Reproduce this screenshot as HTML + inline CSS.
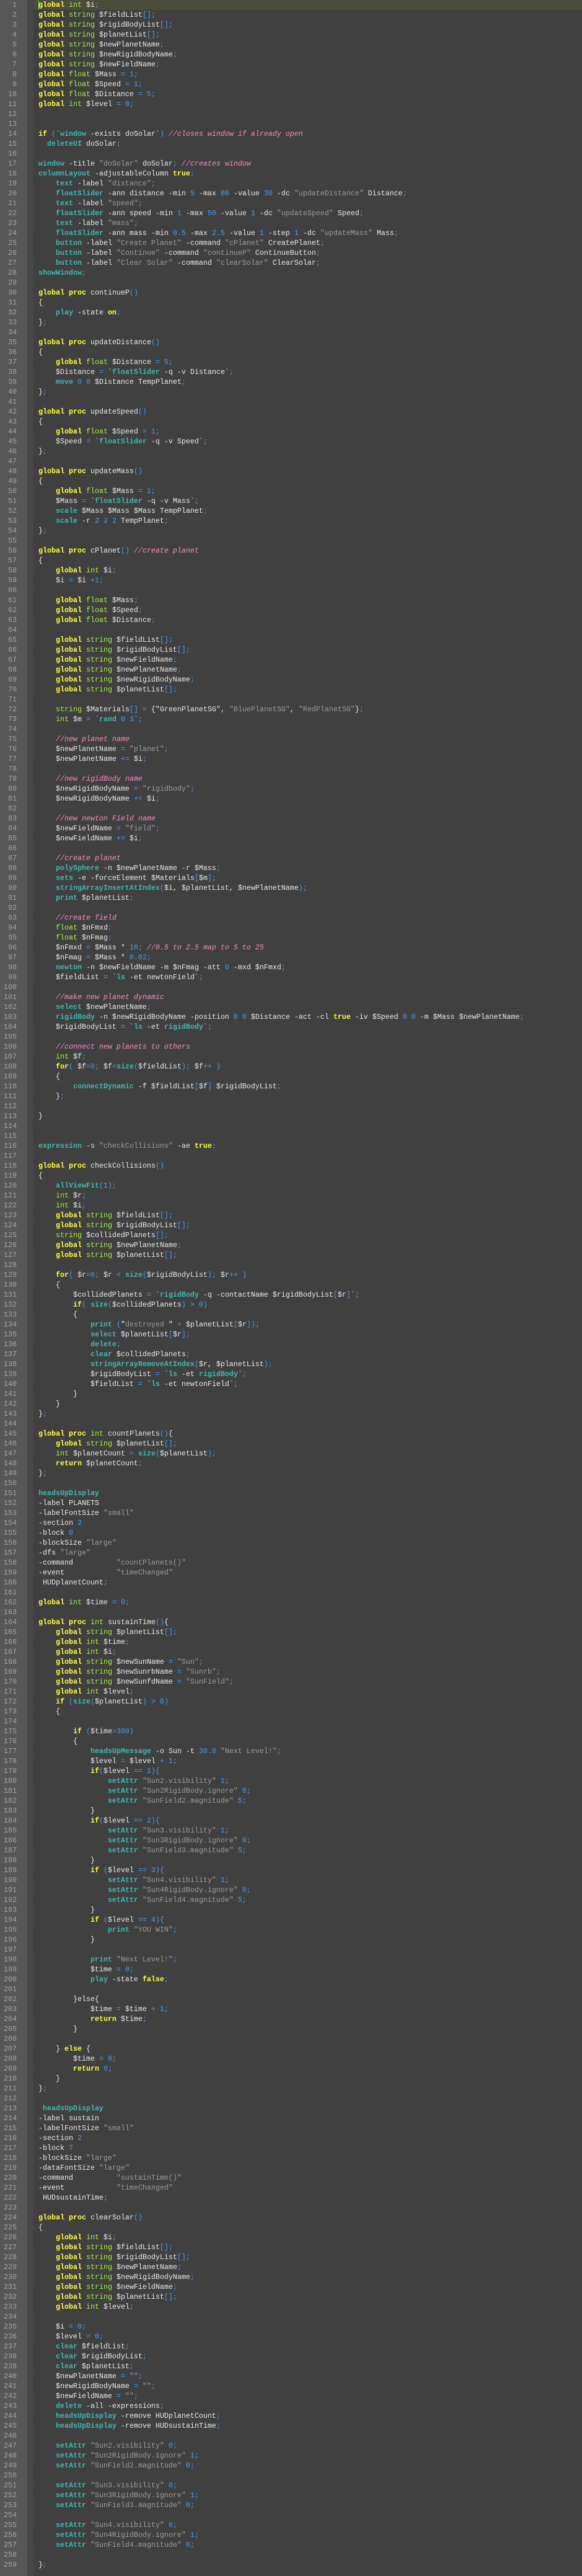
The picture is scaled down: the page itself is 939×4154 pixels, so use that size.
<!DOCTYPE html>
<html><head><meta charset="utf-8">
<style>
html,body{margin:0;padding:0;background:#404040;width:939px;height:4154px;overflow:hidden}
body{position:relative;font-family:"Liberation Mono",monospace;font-size:11.67px}
#gut{position:absolute;left:0;top:0;width:44px;height:4154px;background:#575757}
#strip{position:absolute;left:44px;top:0;width:10px;height:4154px;background-color:#4a4a4a;background-image:repeating-linear-gradient(45deg,#444 0 1px,transparent 1px 2px)}
#hl{position:absolute;left:54px;top:0;width:885px;height:16px;background:#4c4c3a}
#cur{position:absolute;left:62px;top:1px;width:1px;height:14px;background:#7cff40}
pre{margin:0;position:absolute;top:0;line-height:16px;font-family:inherit;font-size:inherit}
#nums{left:0;width:27px;text-align:right;color:#a4a4a4}
#code{left:62px;color:#e8e8e8}
k{color:#ffff3c;font-weight:bold}
t{color:#a6f03a}
c{color:#3fb8b0;font-weight:bold}
g{color:#9c9c9c}
n{color:#4a9cf0}
m{color:#f58cc0;font-style:italic}
</style></head><body>
<div id="gut"></div><div id="strip"></div><div id="hl"></div>
<pre id="nums">1
2
3
4
5
6
7
8
9
10
11
12
13
14
15
16
17
18
19
20
21
22
23
24
25
26
27
28
29
30
31
32
33
34
35
36
37
38
39
40
41
42
43
44
45
46
47
48
49
50
51
52
53
54
55
56
57
58
59
60
61
62
63
64
65
66
67
68
69
70
71
72
73
74
75
76
77
78
79
80
81
82
83
84
85
86
87
88
89
90
91
92
93
94
95
96
97
98
99
100
101
102
103
104
105
106
107
108
109
110
111
112
113
114
115
116
117
118
119
120
121
122
123
124
125
126
127
128
129
130
131
132
133
134
135
136
137
138
139
140
141
142
143
144
145
146
147
148
149
150
151
152
153
154
155
156
157
158
159
160
161
162
163
164
165
166
167
168
169
170
171
172
173
174
175
176
177
178
179
180
181
182
183
184
185
186
187
188
189
190
191
192
193
194
195
196
197
198
199
200
201
202
203
204
205
206
207
208
209
210
211
212
213
214
215
216
217
218
219
220
221
222
223
224
225
226
227
228
229
230
231
232
233
234
235
236
237
238
239
240
241
242
243
244
245
246
247
248
249
250
251
252
253
254
255
256
257
258
259</pre>
<pre id="code"><k>global</k> <t>int</t> $i<n>;</n>
<k>global</k> <t>string</t> $fieldList<n>[];</n>
<k>global</k> <t>string</t> $rigidBodyList<n>[];</n>
<k>global</k> <t>string</t> $planetList<n>[];</n>
<k>global</k> <t>string</t> $newPlanetName<n>;</n>
<k>global</k> <t>string</t> $newRigidBodyName<n>;</n>
<k>global</k> <t>string</t> $newFieldName<n>;</n>
<k>global</k> <t>float</t> $Mass <n>=</n> <n>1;</n>
<k>global</k> <t>float</t> $Speed <n>=</n> <n>1;</n>
<k>global</k> <t>float</t> $Distance <n>=</n> <n>5;</n>
<k>global</k> <t>int</t> $level <n>=</n> <n>0;</n>


<k>if</k> <n>(</n>`<c>window</c> -exists doSolar`<n>)</n> <m>//closes window if already open</m>
  <c>deleteUI</c> doSolar<n>;</n>

<c>window</c> -title <g>"doSolar"</g> doSolar<n>;</n> <m>//creates window</m>
<c>columnLayout</c> -adjustableColumn <k>true</k><n>;</n>
    <c>text</c> -label <g>"distance"</g><n>;</n>
    <c>floatSlider</c> -ann distance -min <n>5</n> -max <n>80</n> -value <n>30</n> -dc <g>"updateDistance"</g> Distance<n>;</n>
    <c>text</c> -label <g>"speed"</g><n>;</n>
    <c>floatSlider</c> -ann speed -min <n>1</n> -max <n>50</n> -value <n>1</n> -dc <g>"updateSpeed"</g> Speed<n>;</n>
    <c>text</c> -label <g>"mass"</g><n>;</n>
    <c>floatSlider</c> -ann mass -min <n>0.5</n> -max <n>2.5</n> -value <n>1</n> -step <n>1</n> -dc <g>"updateMass"</g> Mass<n>;</n>
    <c>button</c> -label <g>"Create Planet"</g> -command <g>"cPlanet"</g> CreatePlanet<n>;</n>
    <c>button</c> -label <g>"Continue"</g> -command <g>"continueP"</g> ContinueButton<n>;</n>
    <c>button</c> -label <g>"Clear Solar"</g> -command <g>"clearSolar"</g> ClearSolar<n>;</n>
<c>showWindow</c><n>;</n>

<k>global</k> <k>proc</k> continueP<n>()</n>
{
    <c>play</c> -state <k>on</k><n>;</n>
}<n>;</n>

<k>global</k> <k>proc</k> updateDistance<n>()</n>
{
    <k>global</k> <t>float</t> $Distance <n>=</n> <n>5;</n>
    $Distance <n>=</n> `<c>floatSlider</c> -q -v Distance`<n>;</n>
    <c>move</c> <n>0</n> <n>0</n> $Distance TempPlanet<n>;</n>
}<n>;</n>

<k>global</k> <k>proc</k> updateSpeed<n>()</n>
{
    <k>global</k> <t>float</t> $Speed <n>=</n> <n>1;</n>
    $Speed <n>=</n> `<c>floatSlider</c> -q -v Speed`<n>;</n>
}<n>;</n>

<k>global</k> <k>proc</k> updateMass<n>()</n>
{
    <k>global</k> <t>float</t> $Mass <n>=</n> <n>1;</n>
    $Mass <n>=</n> `<c>floatSlider</c> -q -v Mass`<n>;</n>
    <c>scale</c> $Mass $Mass $Mass TempPlanet<n>;</n>
    <c>scale</c> -r <n>2</n> <n>2</n> <n>2</n> TempPlanet<n>;</n>
}<n>;</n>

<k>global</k> <k>proc</k> cPlanet<n>()</n> <m>//create planet</m>
{
    <k>global</k> <t>int</t> $i<n>;</n>
    $i <n>=</n> $i <n>+1;</n>

    <k>global</k> <t>float</t> $Mass<n>;</n>
    <k>global</k> <t>float</t> $Speed<n>;</n>
    <k>global</k> <t>float</t> $Distance<n>;</n>

    <k>global</k> <t>string</t> $fieldList<n>[];</n>
    <k>global</k> <t>string</t> $rigidBodyList<n>[];</n>
    <k>global</k> <t>string</t> $newFieldName<n>;</n>
    <k>global</k> <t>string</t> $newPlanetName<n>;</n>
    <k>global</k> <t>string</t> $newRigidBodyName<n>;</n>
    <k>global</k> <t>string</t> $planetList<n>[];</n>

    <t>string</t> $Materials<n>[]</n> <n>=</n> {"GreenPlanetSG", <g>"BluePlanetSG"</g>, <g>"RedPlanetSG"</g>}<n>;</n>
    <t>int</t> $m <n>=</n> `<c>rand</c> <n>0</n> <n>3</n>`<n>;</n>

    <m>//new planet name</m>
    $newPlanetName <n>=</n> <g>"planet"</g><n>;</n>
    $newPlanetName <n>+=</n> $i<n>;</n>

    <m>//new rigidBody name</m>
    $newRigidBodyName <n>=</n> <g>"rigidbody"</g><n>;</n>
    $newRigidBodyName <n>+=</n> $i<n>;</n>

    <m>//new newton Field name</m>
    $newFieldName <n>=</n> <g>"field"</g><n>;</n>
    $newFieldName <n>+=</n> $i<n>;</n>

    <m>//create planet</m>
    <c>polySphere</c> -n $newPlanetName -r $Mass<n>;</n>
    <c>sets</c> -e -forceElement $Materials<n>[</n>$m<n>];</n>
    <c>stringArrayInsertAtIndex</c><n>(</n>$i, $planetList, $newPlanetName<n>);</n>
    <c>print</c> $planetList<n>;</n>

    <m>//create field</m>
    <t>float</t> $nFmxd<n>;</n>
    <t>float</t> $nFmag<n>;</n>
    $nFmxd <n>=</n> $Mass * <n>10;</n> <m>//0.5 to 2.5 map to 5 to 25</m>
    $nFmag <n>=</n> $Mass * <n>0.02;</n>
    <c>newton</c> -n $newFieldName -m $nFmag -att <n>0</n> -mxd $nFmxd<n>;</n>
    $fieldList <n>=</n> `<c>ls</c> -et newtonField`<n>;</n>

    <m>//make new planet dynamic</m>
    <c>select</c> $newPlanetName<n>;</n>
    <c>rigidBody</c> -n $newRigidBodyName -position <n>0</n> <n>0</n> $Distance -act -cl <k>true</k> -iv $Speed <n>0</n> <n>0</n> -m $Mass $newPlanetName<n>;</n>
    $rigidBodyList <n>=</n> `<c>ls</c> -et <c>rigidBody</c>`<n>;</n>

    <m>//connect new planets to others</m>
    <t>int</t> $f<n>;</n>
    <k>for</k><n>(</n> $f<n>=0;</n> $f<n>&lt;</n><c>size</c><n>(</n>$fieldList<n>);</n> $f<n>++ )</n>
    {
        <c>connectDynamic</c> -f $fieldList<n>[</n>$f<n>]</n> $rigidBodyList<n>;</n>
    }<n>;</n>

}


<c>expression</c> -s <g>"checkCollisions"</g> -ae <k>true</k><n>;</n>

<k>global</k> <k>proc</k> checkCollisions<n>()</n>
{
    <c>allViewFit</c><n>(1);</n>
    <t>int</t> $r<n>;</n>
    <t>int</t> $i<n>;</n>
    <k>global</k> <t>string</t> $fieldList<n>[];</n>
    <k>global</k> <t>string</t> $rigidBodyList<n>[];</n>
    <t>string</t> $collidedPlanets<n>[];</n>
    <k>global</k> <t>string</t> $newPlanetName<n>;</n>
    <k>global</k> <t>string</t> $planetList<n>[];</n>

    <k>for</k><n>(</n> $r<n>=0;</n> $r <n>&lt;</n> <c>size</c><n>(</n>$rigidBodyList<n>);</n> $r<n>++ )</n>
    {
        $collidedPlanets <n>=</n> `<c>rigidBody</c> -q -contactName $rigidBodyList<n>[</n>$r<n>]</n>`<n>;</n>
        <k>if</k><n>(</n> <c>size</c><n>(</n>$collidedPlanets<n>)</n> <n>&gt;</n> <n>0)</n>
        {
            <c>print</c> <n>(</n>"<g>destroyed </g>" <n>+</n> $planetList<n>[</n>$r<n>]);</n>
            <c>select</c> $planetList<n>[</n>$r<n>];</n>
            <c>delete</c><n>;</n>
            <c>clear</c> $collidedPlanets<n>;</n>
            <c>stringArrayRemoveAtIndex</c><n>(</n>$r, $planetList<n>);</n>
            $rigidBodyList <n>=</n> `<c>ls</c> -et <c>rigidBody</c>`<n>;</n>
            $fieldList <n>=</n> `<c>ls</c> -et newtonField`<n>;</n>
        }
    }
}<n>;</n>

<k>global</k> <k>proc</k> <t>int</t> countPlanets<n>()</n>{
    <k>global</k> <t>string</t> $planetList<n>[];</n>
    <t>int</t> $planetCount <n>=</n> <c>size</c><n>(</n>$planetList<n>);</n>
    <k>return</k> $planetCount<n>;</n>
}<n>;</n>

<c>headsUpDisplay</c>
-label PLANETS
-labelFontSize <g>"small"</g>
-section <n>2</n>
-block <n>0</n>
-blockSize <g>"large"</g>
-dfs <g>"large"</g>
-command          <g>"countPlanets()"</g>
-event            <g>"timeChanged"</g>
 HUDplanetCount<n>;</n>

<k>global</k> <t>int</t> $time <n>=</n> <n>0;</n>

<k>global</k> <k>proc</k> <t>int</t> sustainTime<n>()</n>{
    <k>global</k> <t>string</t> $planetList<n>[];</n>
    <k>global</k> <t>int</t> $time<n>;</n>
    <k>global</k> <t>int</t> $i<n>;</n>
    <k>global</k> <t>string</t> $newSunName <n>=</n> <g>"Sun"</g><n>;</n>
    <k>global</k> <t>string</t> $newSunrbName <n>=</n> <g>"Sunrb"</g><n>;</n>
    <k>global</k> <t>string</t> $newSunfdName <n>=</n> <g>"SunField"</g><n>;</n>
    <k>global</k> <t>int</t> $level<n>;</n>
    <k>if</k> <n>(</n><c>size</c><n>(</n>$planetList<n>)</n> <n>&gt;</n> <n>8)</n>
    {

        <k>if</k> <n>(</n>$time<n>&gt;300)</n>
        {
            <c>headsUpMessage</c> -o Sun -t <n>30.0</n> <g>"Next Level!"</g><n>;</n>
            $level <n>=</n> $level <n>+</n> <n>1;</n>
            <k>if</k><n>(</n>$level <n>==</n> <n>1){</n>
                <c>setAttr</c> <g>"Sun2.visibility"</g> <n>1;</n>
                <c>setAttr</c> <g>"Sun2RigidBody.ignore"</g> <n>0;</n>
                <c>setAttr</c> <g>"SunField2.magnitude"</g> <n>5;</n>
            }
            <k>if</k><n>(</n>$level <n>==</n> <n>2){</n>
                <c>setAttr</c> <g>"Sun3.visibility"</g> <n>1;</n>
                <c>setAttr</c> <g>"Sun3RigidBody.ignore"</g> <n>0;</n>
                <c>setAttr</c> <g>"SunField3.magnitude"</g> <n>5;</n>
            }
            <k>if</k> <n>(</n>$level <n>==</n> <n>3){</n>
                <c>setAttr</c> <g>"Sun4.visibility"</g> <n>1;</n>
                <c>setAttr</c> <g>"Sun4RigidBody.ignore"</g> <n>0;</n>
                <c>setAttr</c> <g>"SunField4.magnitude"</g> <n>5;</n>
            }
            <k>if</k> <n>(</n>$level <n>==</n> <n>4){</n>
                <c>print</c> <g>"YOU WIN"</g><n>;</n>
            }

            <c>print</c> <g>"Next Level!"</g><n>;</n>
            $time <n>=</n> <n>0;</n>
            <c>play</c> -state <k>false</k><n>;</n>

        }else{
            $time <n>=</n> $time <n>+</n> <n>1;</n>
            <k>return</k> $time<n>;</n>
        }

    } <k>else</k> {
        $time <n>=</n> <n>0;</n>
        <k>return</k> <n>0;</n>
    }
}<n>;</n>

 <c>headsUpDisplay</c>
-label sustain
-labelFontSize <g>"small"</g>
-section <n>2</n>
-block <n>7</n>
-blockSize <g>"large"</g>
-dataFontSize <g>"large"</g>
-command          <g>"sustainTime()"</g>
-event            <g>"timeChanged"</g>
 HUDsustainTime<n>;</n>

<k>global</k> <k>proc</k> clearSolar<n>()</n>
{
    <k>global</k> <t>int</t> $i<n>;</n>
    <k>global</k> <t>string</t> $fieldList<n>[];</n>
    <k>global</k> <t>string</t> $rigidBodyList<n>[];</n>
    <k>global</k> <t>string</t> $newPlanetName<n>;</n>
    <k>global</k> <t>string</t> $newRigidBodyName<n>;</n>
    <k>global</k> <t>string</t> $newFieldName<n>;</n>
    <k>global</k> <t>string</t> $planetList<n>[];</n>
    <k>global</k> <t>int</t> $level<n>;</n>

    $i <n>=</n> <n>0;</n>
    $level <n>=</n> <n>0;</n>
    <c>clear</c> $fieldList<n>;</n>
    <c>clear</c> $rigidBodyList<n>;</n>
    <c>clear</c> $planetList<n>;</n>
    $newPlanetName <n>=</n> <g>""</g><n>;</n>
    $newRigidBodyName <n>=</n> <g>""</g><n>;</n>
    $newFieldName <n>=</n> <g>""</g><n>;</n>
    <c>delete</c> -all -expressions<n>;</n>
    <c>headsUpDisplay</c> -remove HUDplanetCount<n>;</n>
    <c>headsUpDisplay</c> -remove HUDsustainTime<n>;</n>

    <c>setAttr</c> <g>"Sun2.visibility"</g> <n>0;</n>
    <c>setAttr</c> <g>"Sun2RigidBody.ignore"</g> <n>1;</n>
    <c>setAttr</c> <g>"SunField2.magnitude"</g> <n>0;</n>

    <c>setAttr</c> <g>"Sun3.visibility"</g> <n>0;</n>
    <c>setAttr</c> <g>"Sun3RigidBody.ignore"</g> <n>1;</n>
    <c>setAttr</c> <g>"SunField3.magnitude"</g> <n>0;</n>

    <c>setAttr</c> <g>"Sun4.visibility"</g> <n>0;</n>
    <c>setAttr</c> <g>"Sun4RigidBody.ignore"</g> <n>1;</n>
    <c>setAttr</c> <g>"SunField4.magnitude"</g> <n>0;</n>

}<n>;</n></pre>
<div id="cur"></div>
</body></html>
